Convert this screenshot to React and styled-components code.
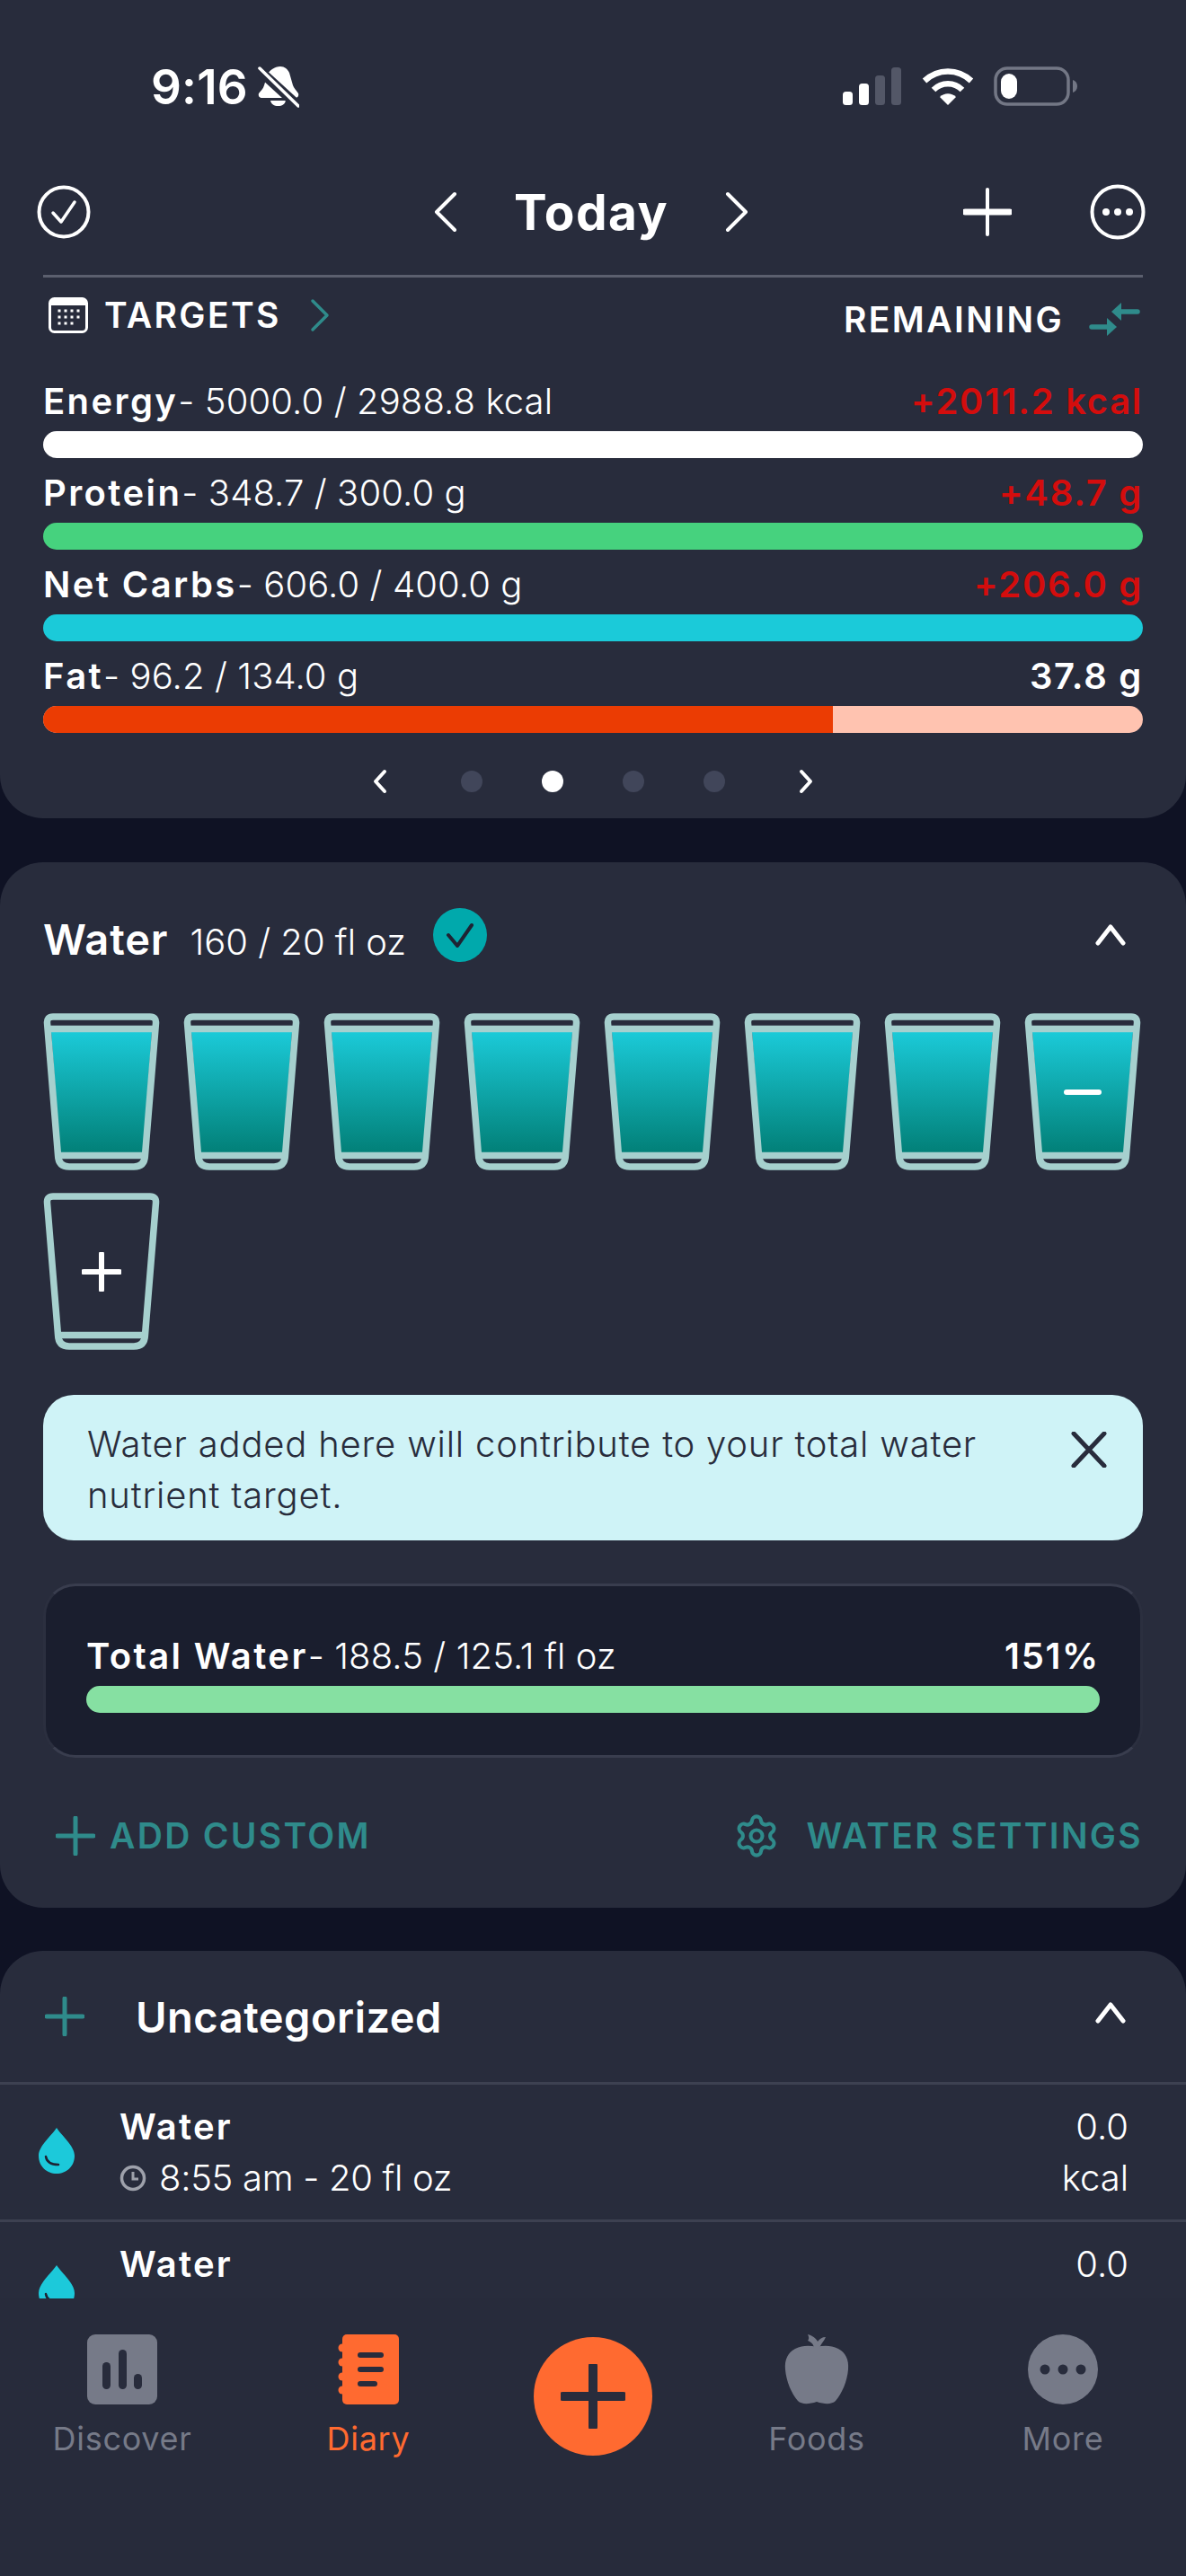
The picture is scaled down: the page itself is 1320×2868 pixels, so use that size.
import React, { useId } from "react";
import styled, { createGlobalStyle } from "styled-components";
import { Settings } from "lucide-react";

const TEAL = "#2F8B8B";
const CARD = "#282C3C";
const FONT = `Inter, "Liberation Sans", sans-serif`;

const Global = createGlobalStyle`
  html, body { margin: 0; padding: 0; background: #0F1224; }
  * { box-sizing: border-box; }
  body { font-family: ${FONT}; color: #fff; }
`;

const Page = styled.div`
  position: relative;
  width: 1320px;
  height: 2868px;
  overflow: hidden;
  background: #0F1224;
`;
const Card = styled.section`
  background: ${CARD};
  border-radius: ${(p) => p.$radius || "48px"};
  margin-bottom: ${(p) => p.$gap || "0"};
`;
const SummaryCard = styled(Card)`
  height: 911px;
  padding: 0 48px;
`;
const StatusBar = styled.div`
  height: 166px;
  padding: 70px 0 0 120px;
  display: flex;
  justify-content: space-between;
  align-items: flex-start;
`;
const StatusLeft = styled.div`
  display: flex;
  align-items: center;
  gap: 11px;
  height: 54px;
`;
const Clock = styled.span`
  font-size: 53px;
  font-weight: 600;
  line-height: 54px;
  letter-spacing: 0.2px;
`;
const StatusRight = styled.div`
  display: flex;
  align-items: center;
  gap: 22px;
  height: 54px;
  margin-top: -1px;
  padding-right: 72px;
`;
const NavRow = styled.div`
  height: 140px;
  margin: 0 -3px 0 -7px;
  display: grid;
  grid-template-columns: 1fr auto 1fr;
  align-items: center;
`;
const NavGroup = styled.div`
  display: flex;
  align-items: center;
  gap: ${(p) => p.$gap || "0"};
  justify-content: ${(p) => p.$justify || "flex-start"};
`;
const Title = styled.h1`
  margin: 0;
  font-size: 55px;
  font-weight: 700;
  line-height: 64px;
  letter-spacing: 1.4px;
`;
const Rule = styled.div`
  height: 3px;
  background: #5B5F6E;
`;
const TargetsRow = styled.div`
  height: 105px;
  display: flex;
  justify-content: space-between;
  align-items: flex-start;
`;
const TargetsLeft = styled.div`
  display: flex;
  align-items: center;
  padding: 19px 0 0 6px;
  gap: 18px;
`;
const TargetsChevron = styled.span`
  display: flex;
  margin-left: 14px;
`;
const TargetsRight = styled.div`
  display: flex;
  align-items: center;
  padding: 24px 2px 0 0;
  gap: 28px;
`;
const Caps = styled.span`
  font-size: 39px;
  font-weight: 600;
  line-height: 46px;
  letter-spacing: 2.4px;
`;
const Macro = styled.div`
  margin-bottom: 6px;
`;
const MacroText = styled.div`
  height: 66px;
  display: flex;
  justify-content: space-between;
  align-items: center;
  font-size: 40px;
  line-height: 50px;
  letter-spacing: 0.1px;
`;
const MacroLabel = styled.span`
  font-weight: 300;
  white-space: nowrap;
  b { font-weight: 600; letter-spacing: 2.4px; }
`;
const MacroValue = styled.span`
  font-weight: 600;
  letter-spacing: 1.7px;
  color: ${(p) => p.$color || "#fff"};
`;
const Track = styled.div`
  height: 30px;
  border-radius: 15px;
  overflow: hidden;
  background: ${(p) => p.$track || p.$fill};
`;
const Fill = styled.div`
  height: 100%;
  background: ${(p) => p.$fill};
`;
const Pager = styled.div`
  height: 95px;
  margin-top: 6px;
  display: flex;
  align-items: center;
  justify-content: center;
  gap: 66px;
`;
const PagerArrow = styled.span`
  display: flex;
  margin: ${(p) => (p.$end ? "0 0 0 16px" : "0 16px 0 0")};
`;
const Dot = styled.span`
  width: 24px;
  height: 24px;
  border-radius: 50%;
  background: ${(p) => (p.$active ? "#fff" : "#41465A")};
`;
const WaterCard = styled(Card)`
  height: 1164px;
  margin-top: 49px;
  padding: 0 48px;
`;
const WaterHead = styled.div`
  height: 168px;
  padding: 2px 19px 0 0;
  display: flex;
  align-items: center;
  justify-content: space-between;
`;
const WaterTitle = styled.div`
  display: flex;
  align-items: center;
`;
const WaterName = styled.span`
  font-size: 47px;
  font-weight: 600;
  letter-spacing: 0.9px;
`;
const WaterAmount = styled.span`
  font-size: 40px;
  font-weight: 300;
  margin-left: 24px;
  position: relative;
  top: 3px;
`;
const Badge = styled.span`
  display: flex;
  width: 60px;
  height: 60px;
  margin: -8px 0 0 30px;
`;
const UpArrow = styled.span`
  display: flex;
  margin-top: -8px;
`;
const Glasses = styled.div`
  display: flex;
  flex-wrap: wrap;
  gap: 25px 26px;
`;
const GlassWrap = styled.div`
  position: relative;
  width: 130px;
  height: 175px;
  svg { display: block; }
`;
const GlassMark = styled.span`
  position: absolute;
  left: 50%;
  top: 50%;
  transform: translate(-50%, -50%);
  display: flex;
`;
const MinusBar = styled.span`
  display: block;
  width: 42px;
  height: 6px;
  border-radius: 3px;
  background: #fff;
`;
const Notice = styled.div`
  margin-top: 50px;
  height: 162px;
  border-radius: 34px;
  background: #CFF3F7;
  color: #282C3C;
  padding: 26px 40px 0 49px;
  display: flex;
  justify-content: space-between;
  align-items: flex-start;
`;
const NoticeText = styled.p`
  margin: 0;
  width: 1060px;
  font-size: 40px;
  font-weight: 300;
  line-height: 57px;
  letter-spacing: 0.8px;
`;
const NoticeClose = styled.span`
  display: flex;
  margin-top: 15px;
`;
const TotalPanel = styled.div`
  margin-top: 48px;
  height: 194px;
  border-radius: 36px;
  background: #1A1E2E;
  border: 3px solid #393D4E;
  border-left-color: #2B2F3F;
  border-right-color: #2B2F3F;
  padding: 45px 45px 0;
`;
const Actions = styled.div`
  height: 174px;
  display: flex;
  align-items: center;
  justify-content: space-between;
`;
const Action = styled.div`
  display: flex;
  align-items: center;
  gap: ${(p) => p.$gap};
  padding-left: ${(p) => p.$inset || "0"};
  color: ${TEAL};
`;
const ActionText = styled.span`
  font-size: 39px;
  font-weight: 600;
  letter-spacing: 2.3px;
  line-height: 48px;
`;
const ListCard = styled(Card)`
  margin-top: 48px;
  height: 760px;
  overflow: hidden;
  border-radius: 48px 48px 0 0;
`;
const ListHead = styled.div`
  height: 146px;
  padding: 0 67px 0 50px;
  display: flex;
  align-items: center;
  justify-content: space-between;
`;
const ListHeadLeft = styled.div`
  display: flex;
  align-items: center;
  gap: 57px;
`;
const ListTitle = styled.span`
  font-size: 47px;
  font-weight: 600;
  letter-spacing: 0.5px;
`;
const Entry = styled.div`
  height: 153px;
  border-top: 3px solid #3D4151;
  padding: 18px 64px 0 42px;
  display: grid;
  grid-template-columns: 91px 1fr auto;
  align-items: start;
`;
const DropCell = styled.div`
  padding-top: 30px;
  display: flex;
`;
const EntryText = styled.div`
  display: flex;
  flex-direction: column;
`;
const EntryName = styled.span`
  font-size: 40px;
  font-weight: 600;
  line-height: 57px;
  letter-spacing: 2.2px;
`;
const EntrySub = styled.span`
  display: flex;
  align-items: center;
  gap: 14px;
  font-size: 40px;
  font-weight: 300;
  line-height: 57px;
  letter-spacing: -0.3px;
`;
const EntryKcal = styled.div`
  text-align: right;
  font-size: 40px;
  font-weight: 300;
  line-height: 57px;
`;
const TabBar = styled.nav`
  position: absolute;
  left: 0;
  right: 0;
  top: 2559px;
  height: 309px;
  background: #272B3B;
  padding-top: 40px;
  display: grid;
  grid-template-columns: 272px 276px 224px 274px 274px;
  justify-items: center;
  align-items: start;
`;
const Tab = styled.div`
  display: flex;
  flex-direction: column;
  align-items: center;
  gap: 15px;
  color: ${(p) => (p.$active ? "#FF6A30" : "#767A88")};
`;
const TabLabel = styled.span`
  font-size: 36px;
  line-height: 46px;
  font-weight: 400;
  letter-spacing: 0.7px;
`;
const Fab = styled.div`
  width: 132px;
  height: 132px;
  margin-top: 3px;
  border-radius: 50%;
  background: #FF6A30;
  display: flex;
  align-items: center;
  justify-content: center;
`;

const Chevron = ({ dir = "right", w = 26, h = 46, sw = 4, color = "#fff" }) => {
  const d = {
    right: `M3 3 L${w - 3} ${h / 2} L3 ${h - 3}`,
    left: `M${w - 3} 3 L3 ${h / 2} L${w - 3} ${h - 3}`,
    up: `M3 ${h - 3} L${w / 2} 3 L${w - 3} ${h - 3}`,
  }[dir];
  return (
    <svg width={w} height={h} viewBox={`0 0 ${w} ${h}`} fill="none">
      <path d={d} stroke={color} strokeWidth={sw} strokeLinecap="round" strokeLinejoin="round" />
    </svg>
  );
};
const Plus = ({ size = 52, sw = 4, hw, color = "#fff" }) => (
  <svg width={size} height={size} viewBox={`0 0 ${size} ${size}`} fill="none">
    <path d={`M${size / 2} 2 V${size - 2}`} stroke={color} strokeWidth={sw} strokeLinecap="round" />
    <path d={`M2 ${size / 2} H${size - 2}`} stroke={color} strokeWidth={hw || sw} strokeLinecap="round" />
  </svg>
);
const BellOff = () => (
  <svg width="46" height="48" viewBox="0 0 46 48">
    <path fill="#fff" d="M25 1c5 0 8 3 10 7l4 14c1 3 4 6 6 9 1 3-1 5-4 5H5c-3 0-5-2-4-5 2-3 5-5 6-9l3-10C12 5 19 1 25 1z" />
    <path fill="#fff" d="M14 39h17c-1 4-4 6-8.500 6S15 43 14 39z" />
    <path stroke={CARD} strokeWidth="11" d="M-2 2 L46 46" />
    <path stroke="#fff" strokeWidth="3.500" strokeLinecap="round" d="M2 3 L45 45" />
  </svg>
);
const Signal = () => (
  <svg width="66" height="42" viewBox="0 0 66 42">
    <rect x="0" y="27" width="11" height="15" rx="3.500" fill="#fff" />
    <rect x="18" y="18" width="11" height="24" rx="3.500" fill="#fff" />
    <rect x="36" y="9" width="11" height="33" rx="3.500" fill="#535767" />
    <rect x="54" y="0" width="11" height="42" rx="3.500" fill="#535767" />
  </svg>
);
const Wifi = () => (
  <svg width="58" height="42" viewBox="0 0 58 42" fill="none">
    <path d="M3 15 C18 1 40 1 55 15" stroke="#fff" strokeWidth="6.500" />
    <path d="M13 25 C22 16 36 16 45 25" stroke="#fff" strokeWidth="6.500" />
    <path fill="#fff" d="M20 33 C25 28 33 28 38 33 L29 42z" />
  </svg>
);
const Battery = () => (
  <svg width="94" height="44" viewBox="0 0 94 44" fill="none">
    <rect x="2" y="2" width="81" height="40" rx="13" stroke="#737785" strokeWidth="3.500" />
    <rect x="8" y="8" width="18" height="28" rx="9" fill="#fff" />
    <path d="M88 15c3 1 5 3.500 5 7s-2 6-5 7z" fill="#737785" />
  </svg>
);
const CheckCircle = () => (
  <svg width="60" height="60" viewBox="0 0 60 60" fill="none">
    <circle cx="30" cy="30" r="27.500" stroke="#fff" strokeWidth="4" />
    <path d="M18 31 L27 41 L42 19" stroke="#fff" strokeWidth="3.500" strokeLinecap="round" strokeLinejoin="round" />
  </svg>
);
const MoreCircle = () => (
  <svg width="62" height="62" viewBox="0 0 62 62" fill="none">
    <circle cx="31" cy="31" r="28.500" stroke="#fff" strokeWidth="4" />
    <circle cx="18" cy="31" r="4" fill="#fff" />
    <circle cx="31" cy="31" r="4" fill="#fff" />
    <circle cx="44" cy="31" r="4" fill="#fff" />
  </svg>
);
const Calendar = () => (
  <svg width="44" height="40" viewBox="0 0 44 40" fill="none">
    <rect x="1.500" y="1.500" width="41" height="37" rx="5" stroke="#fff" strokeWidth="3" />
    <path d="M2 9 V6 a4 4 0 0 1 4 -4 H38 a4 4 0 0 1 4 4 V9z" fill="#fff" />
    {[15, 22, 29].map((y, j) =>
      [12, 19, 26, 33].map((x, i) =>
        j === 2 && i === 3 ? null : <rect key={x + "-" + y} x={x - 1.5} y={y - 1.5} width="3" height="3" fill="#fff" />
      )
    )}
  </svg>
);
const SwapArrows = () => (
  <svg width="58" height="38" viewBox="0 0 58 38" fill="none">
    <path d="M34 10 H54" stroke={TEAL} strokeWidth="5.500" strokeLinecap="round" />
    <path d="M25 10 L36 0 V20z" fill={TEAL} />
    <path d="M3 27 H22" stroke={TEAL} strokeWidth="5.500" strokeLinecap="round" />
    <path d="M31 27 L20 17 V37z" fill={TEAL} />
  </svg>
);
const CheckBadge = () => (
  <svg width="60" height="60" viewBox="0 0 60 60" fill="none">
    <circle cx="30" cy="30" r="30" fill="#00A9AC" />
    <path d="M17 30 L27 42 L43 19" stroke="#1E2333" strokeWidth="4" strokeLinecap="round" strokeLinejoin="round" />
  </svg>
);
const Glass = ({ full, mark }) => {
  const id = useId().replace(/[^a-zA-Z0-9]/g, "");
  const stroke = "#A6D0CE";
  return (
    <GlassWrap>
      <svg width="130" height="175" viewBox="0 0 130 175" fill="none">
        <defs>
          <linearGradient id={id} x1="0" y1="0" x2="0" y2="1">
            <stop offset="0" stopColor="#1BCAD8" />
            <stop offset="1" stopColor="#028078" />
          </linearGradient>
        </defs>
        {full && <path d="M9 21 H121 L111 155 H19z" fill={`url(#${id})`} />}
        <path
          d="M11 4 H119 Q126 4 125.500 11 L113.500 158 Q113 171 101 171 H29 Q17 171 16.500 158 L4.500 11 Q4 4 11 4z"
          stroke={stroke}
          strokeWidth="7.500"
        />
        {full && <path d="M6 17.500 H124" stroke={stroke} strokeWidth="7.500" />}
        <path d="M17 158.500 H113" stroke={stroke} strokeWidth="7.500" />
      </svg>
      {mark && <GlassMark>{mark}</GlassMark>}
    </GlassWrap>
  );
};
const Drop = () => (
  <svg width="42" height="52" viewBox="0 0 42 52" fill="none">
    <path d="M21 0 C26 8 41 20 41 31 C41 43 32 51 21 51 C10 51 1 43 1 31 C1 20 16 8 21 0z" fill="#1CC9DA" />
    <path d="M9 32 C10 38 15 41 23 41" stroke="#1E2333" strokeWidth="2.500" strokeLinecap="round" />
  </svg>
);
const ClockIcon = () => (
  <svg width="30" height="30" viewBox="0 0 30 30" fill="none">
    <circle cx="15" cy="15" r="12.500" stroke="#9EA1AB" strokeWidth="3.500" />
    <path d="M15 8 V16 H21" stroke="#9EA1AB" strokeWidth="3" />
  </svg>
);
const IconDiscover = () => (
  <svg width="78" height="78" viewBox="0 0 78 78">
    <rect width="78" height="78" rx="9" fill="#767A88" />
    <rect x="17" y="31" width="9" height="30" rx="4.500" fill={CARD} />
    <rect x="35" y="17" width="9" height="44" rx="4.500" fill={CARD} />
    <rect x="52" y="44" width="9" height="17" rx="4.500" fill={CARD} />
  </svg>
);
const IconDiary = () => (
  <svg width="68" height="78" viewBox="0 0 68 78">
    <rect x="5" width="63" height="78" rx="5" fill="#FF6A30" />
    {[15, 31, 47, 62].map((y) => (
      <circle key={y} cx="5" cy={y} r="4.500" fill="#FF6A30" />
    ))}
    <rect x="22" y="20" width="29" height="6" rx="3" fill={CARD} />
    <rect x="22" y="36" width="29" height="6" rx="3" fill={CARD} />
    <rect x="22" y="52" width="22" height="6" rx="3" fill={CARD} />
  </svg>
);
const IconApple = () => (
  <svg width="72" height="78" viewBox="0 0 72 78">
    <path fill="#767A88" d="M36 14 C44 12 52 12 60 16 C68 20 72 28 71 39 C70 52 64 66 57 74 C53 78 45 78 36 75 C27 78 19 78 15 74 C8 66 2 52 1 39 C0 28 4 20 12 16 C20 12 28 12 36 14z" />
    <path fill="#767A88" d="M33 16 C33 12 31 9 26 7 C28 5 27 2 26 0 C31 1 36 5 37 8 C39 5 42 3 46 3 C44 8 40 11 39 16z" />
  </svg>
);
const IconMore = () => (
  <svg width="78" height="78" viewBox="0 0 78 78">
    <circle cx="39" cy="39" r="39" fill="#767A88" />
    <circle cx="19" cy="39" r="5.500" fill={CARD} />
    <circle cx="39" cy="39" r="5.500" fill={CARD} />
    <circle cx="59" cy="39" r="5.500" fill={CARD} />
  </svg>
);

const macros = [
  { name: "Energy", detail: "- 5000.0 / 2988.8 kcal", value: "+2011.2 kcal", over: true, fill: "#FFFFFF" },
  { name: "Protein", detail: "- 348.7 / 300.0 g", value: "+48.7 g", over: true, fill: "#46D27E" },
  { name: "Net Carbs", detail: "- 606.0 / 400.0 g", value: "+206.0 g", over: true, fill: "#1BCAD9" },
  { name: "Fat", detail: "- 96.2 / 134.0 g", value: "37.8 g", fill: "#EB3C03", track: "#FFC3B0", pct: 71.8 },
];

export default function App() {
  return (
    <Page>
      <Global />
      <SummaryCard $radius="0 0 48px 48px">
        <StatusBar>
          <StatusLeft>
            <Clock>9:16</Clock>
            <BellOff />
          </StatusLeft>
          <StatusRight>
            <Signal />
            <Wifi />
            <Battery />
          </StatusRight>
        </StatusBar>
        <NavRow>
          <NavGroup>
            <CheckCircle />
          </NavGroup>
          <NavGroup $gap="63px">
            <Chevron dir="left" />
            <Title>Today</Title>
            <Chevron dir="right" />
          </NavGroup>
          <NavGroup $justify="flex-end" $gap="87px">
            <Plus size={54} sw={4} hw={7} />
            <MoreCircle />
          </NavGroup>
        </NavRow>
        <Rule />
        <TargetsRow>
          <TargetsLeft>
            <Calendar />
            <Caps>TARGETS</Caps>
            <TargetsChevron>
              <Chevron dir="right" w={22} h={38} sw={3.5} color={TEAL} />
            </TargetsChevron>
          </TargetsLeft>
          <TargetsRight>
            <Caps>REMAINING</Caps>
            <SwapArrows />
          </TargetsRight>
        </TargetsRow>
        {macros.map((m) => (
          <Macro key={m.name}>
            <MacroText>
              <MacroLabel>
                <b>{m.name}</b>
                {m.detail}
              </MacroLabel>
              <MacroValue $color={m.over ? "#D40D0D" : "#fff"}>{m.value}</MacroValue>
            </MacroText>
            <Track $fill={m.fill} $track={m.track}>
              {m.pct && <Fill $fill={m.fill} style={{ width: `${m.pct}%` }} />}
            </Track>
          </Macro>
        ))}
        <Pager>
          <PagerArrow>
            <Chevron dir="left" w={16} h={28} sw={4} />
          </PagerArrow>
          <Dot />
          <Dot $active />
          <Dot />
          <Dot />
          <PagerArrow $end>
            <Chevron dir="right" w={16} h={28} sw={4} />
          </PagerArrow>
        </Pager>
      </SummaryCard>

      <WaterCard>
        <WaterHead>
          <WaterTitle>
            <WaterName>Water</WaterName>
            <WaterAmount>160 / 20 fl oz</WaterAmount>
            <Badge>
              <CheckBadge />
            </Badge>
          </WaterTitle>
          <UpArrow>
            <Chevron dir="up" w={34} h={24} sw={5} />
          </UpArrow>
        </WaterHead>
        <Glasses>
          {Array.from({ length: 7 }, (_, i) => (
            <Glass key={i} full />
          ))}
          <Glass full mark={<MinusBar />} />
          <Glass mark={<Plus size={44} sw={6} />} />
        </Glasses>
        <Notice>
          <NoticeText>Water added here will contribute to your total water nutrient target.</NoticeText>
          <NoticeClose>
            <svg width="40" height="40" viewBox="0 0 40 40" fill="none">
              <path d="M3 2 L37 38 M37 2 L3 38" stroke="#282C3C" strokeWidth="5" strokeLinecap="round" />
            </svg>
          </NoticeClose>
        </Notice>
        <TotalPanel>
          <MacroText>
            <MacroLabel>
              <b>Total Water</b>- 188.5 / 125.1 fl oz
            </MacroLabel>
            <MacroValue>151%</MacroValue>
          </MacroText>
          <Track $fill="#86E0A2" />
        </TotalPanel>
        <Actions>
          <Action $gap="16px" $inset="14px">
            <Plus size={44} sw={5} color={TEAL} />
            <ActionText>ADD CUSTOM</ActionText>
          </Action>
          <Action $gap="30px">
            <Settings size={52} strokeWidth={1.9} />
            <ActionText>WATER SETTINGS</ActionText>
          </Action>
        </Actions>
      </WaterCard>

      <ListCard>
        <ListHead>
          <ListHeadLeft>
            <Plus size={44} sw={5} color={TEAL} />
            <ListTitle>Uncategorized</ListTitle>
          </ListHeadLeft>
          <UpArrow>
            <Chevron dir="up" w={34} h={24} sw={5} />
          </UpArrow>
        </ListHead>
        <Entry>
          <DropCell>
            <Drop />
          </DropCell>
          <EntryText>
            <EntryName>Water</EntryName>
            <EntrySub>
              <ClockIcon />
              8:55 am - 20 fl oz
            </EntrySub>
          </EntryText>
          <EntryKcal>
            0.0
            <br />
            kcal
          </EntryKcal>
        </Entry>
        <Entry>
          <DropCell>
            <Drop />
          </DropCell>
          <EntryText>
            <EntryName>Water</EntryName>
          </EntryText>
          <EntryKcal>0.0</EntryKcal>
        </Entry>
      </ListCard>

      <TabBar>
        <Tab>
          <IconDiscover />
          <TabLabel>Discover</TabLabel>
        </Tab>
        <Tab $active>
          <IconDiary />
          <TabLabel>Diary</TabLabel>
        </Tab>
        <Fab>
          <Plus size={72} sw={10} color={CARD} />
        </Fab>
        <Tab>
          <IconApple />
          <TabLabel>Foods</TabLabel>
        </Tab>
        <Tab>
          <IconMore />
          <TabLabel>More</TabLabel>
        </Tab>
      </TabBar>
    </Page>
  );
}
